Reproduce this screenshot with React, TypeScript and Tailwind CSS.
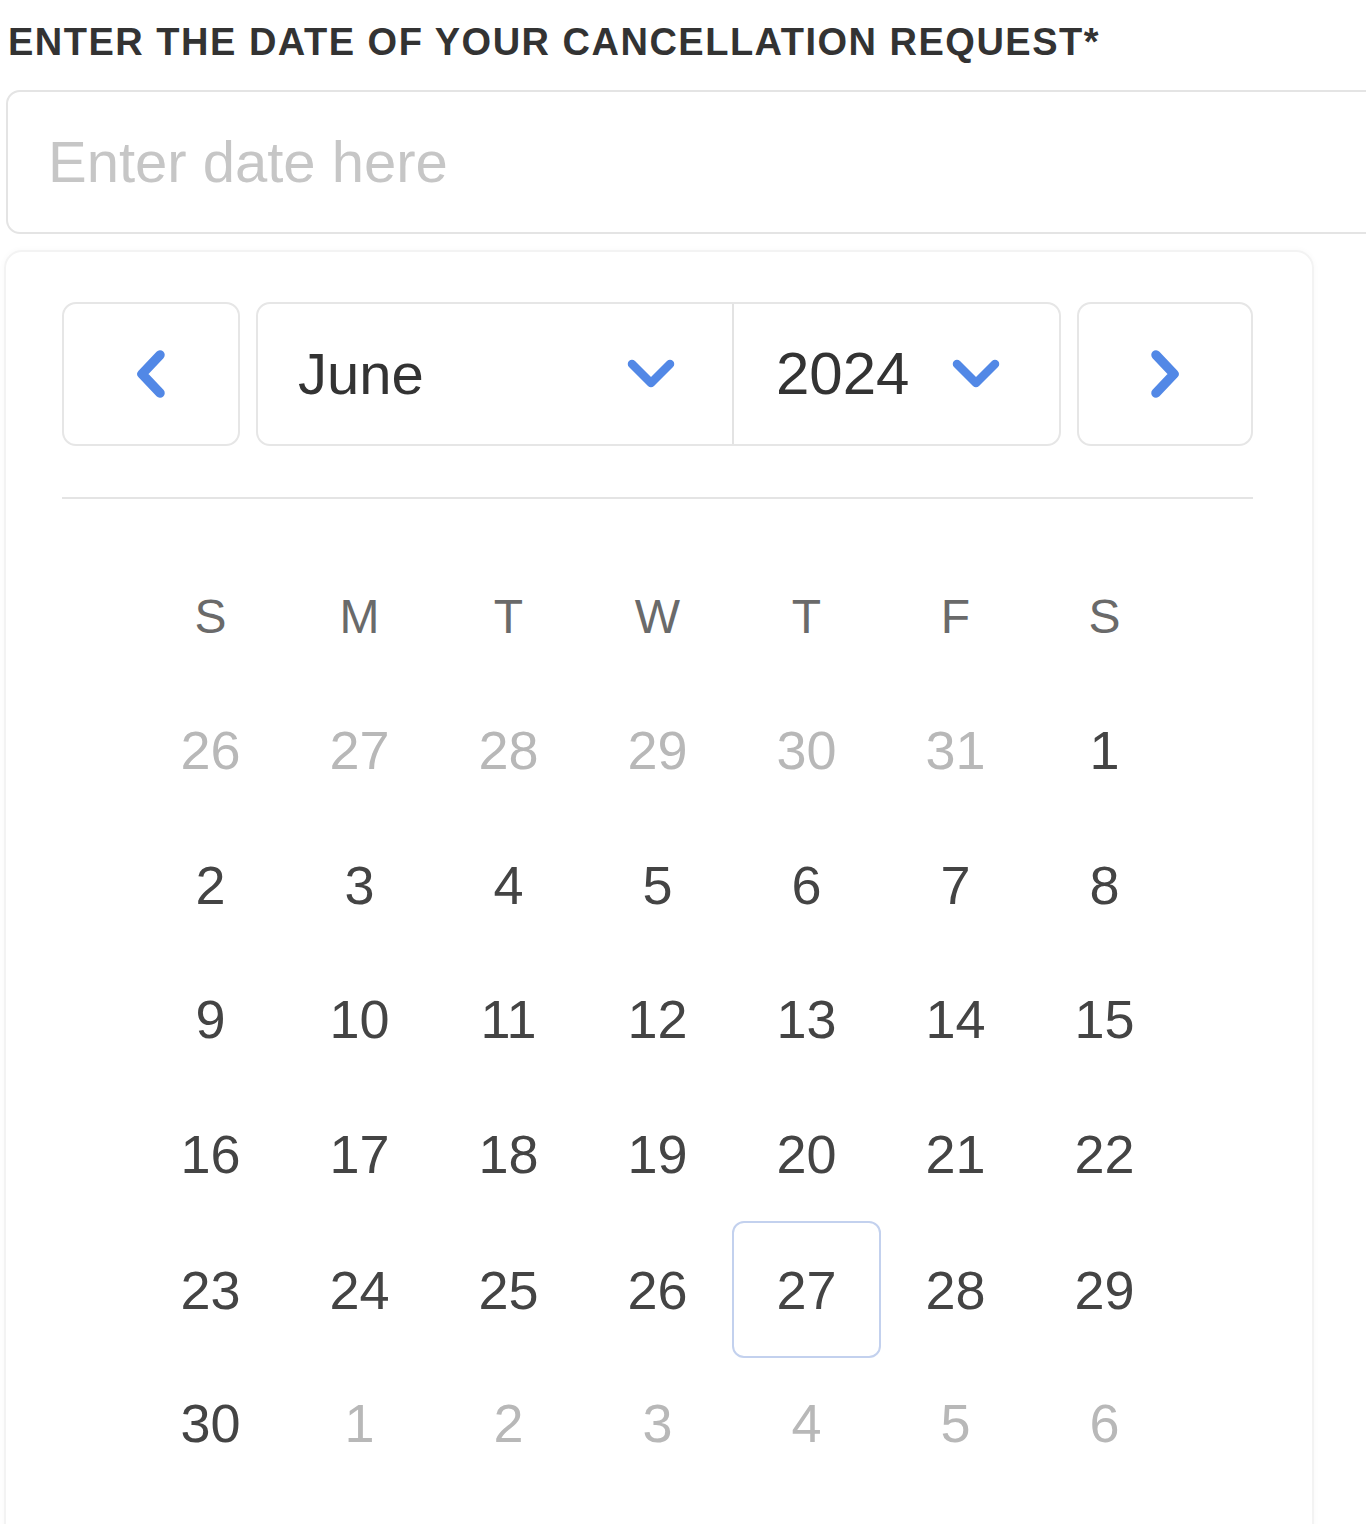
import React from "react";

const WEEKDAYS = ["S", "M", "T", "W", "T", "F", "S"];

type Day = { n: number; out: boolean };

function buildDays(): Day[] {
    const days: Day[] = [];
    for (let d = 26; d <= 31; d++) days.push({ n: d, out: true });
    for (let d = 1; d <= 30; d++) days.push({ n: d, out: false });
    for (let d = 1; d <= 6; d++) days.push({ n: d, out: true });
    return days;
}

function ChevronLeft() {
    return (
        <svg width="36" height="52" viewBox="0 0 36 52" fill="none">
            <polyline points="27,7 9,26 27,45" stroke="#5288e6" strokeWidth="9.5" strokeLinecap="round" strokeLinejoin="round" />
        </svg>
    );
}

function ChevronRight() {
    return (
        <svg width="36" height="52" viewBox="0 0 36 52" fill="none">
            <polyline points="9,7 27,26 9,45" stroke="#5288e6" strokeWidth="9.5" strokeLinecap="round" strokeLinejoin="round" />
        </svg>
    );
}

function ChevronDown() {
    return (
        <svg width="50" height="34" viewBox="0 0 50 34" fill="none">
            <polyline points="6,7 25,26 44,7" stroke="#5288e6" strokeWidth="8.5" strokeLinecap="round" strokeLinejoin="round" />
        </svg>
    );
}

export default function App() {
    const days = buildDays();
    const rows: Day[][] = [];
    for (let i = 0; i < days.length; i += 7) rows.push(days.slice(i, i + 7));

    return (
        <div
            className="w-[1366px] h-[1524px] overflow-hidden bg-white px-[6px]"
            style={{ fontFamily: '"Liberation Sans", Arial, sans-serif' }}
        >
            <div className="pt-[20px] pl-[2px] text-[38px] leading-[44px] font-bold tracking-[1.5px] text-[#333333]">
                ENTER THE DATE OF YOUR CANCELLATION REQUEST*
            </div>

            <div className="mt-[26px] w-[1420px] h-[144px] border-2 border-[#e4e4e4] rounded-[14px] flex items-center pl-[40px]">
                <span className="text-[58px] leading-none text-[#c6c6c6]">Enter date here</span>
            </div>

            <div className="-ml-[2px] mt-[16px] w-[1310px] h-[1400px] border-2 border-[#f3f3f3] rounded-[18px] pt-[50px] pl-[56px] pr-[59px] shadow-[0_0_6px_rgba(0,0,0,0.03)]">
                <div className="flex gap-[16px] h-[144px]">
                    <button className="w-[178px] h-full border-2 border-[#e6e6e6] rounded-[14px] flex items-center justify-center">
                        <ChevronLeft />
                    </button>
                    <div className="flex-1 h-full border-2 border-[#e6e6e6] rounded-[14px] flex">
                        <div className="w-[476px] h-full flex items-center justify-between pl-[40px] pr-[56px] border-r-2 border-[#e3e3e3]">
                            <span className="text-[58px] leading-none text-[#333333]">June</span>
                            <ChevronDown />
                        </div>
                        <div className="flex-1 h-full flex items-center justify-between pl-[42px] pr-[58px]">
                            <span className="text-[60px] leading-none text-[#333333]">2024</span>
                            <ChevronDown />
                        </div>
                    </div>
                    <button className="w-[176px] h-full border-2 border-[#e6e6e6] rounded-[14px] flex items-center justify-center">
                        <ChevronRight />
                    </button>
                </div>

                <div className="mt-[51px] h-[2px] bg-[#e4e4e4]" />

                <div className="mx-[74px] mt-[51px]">
                    <div className="grid grid-cols-7 h-[133px]">
                        {WEEKDAYS.map((w, i) => (
                            <div key={i} className="flex items-center justify-center text-[48px] leading-none text-[#6a6a6a]">
                                {w}
                            </div>
                        ))}
                    </div>
                    {rows.map((row, ri) => (
                        <div key={ri} className="grid grid-cols-7 h-[134.6px]">
                            {row.map((d, di) => {
                                const selected = !d.out && d.n === 27;
                                return (
                                    <div key={di} className="flex items-center justify-center">
                                        <div
                                            className={
                                                selected
                                                    ? "w-[149px] h-[137px] border-2 border-[#c3d1ee] rounded-[12px] flex items-center justify-center text-[54px] leading-none text-[#444444]"
                                                    : d.out
                                                    ? "flex items-center justify-center text-[54px] leading-none text-[#b8b8b8]"
                                                    : "flex items-center justify-center text-[54px] leading-none text-[#444444]"
                                            }
                                        >
                                            {d.n}
                                        </div>
                                    </div>
                                );
                            })}
                        </div>
                    ))}
                </div>
            </div>
        </div>
    );
}
